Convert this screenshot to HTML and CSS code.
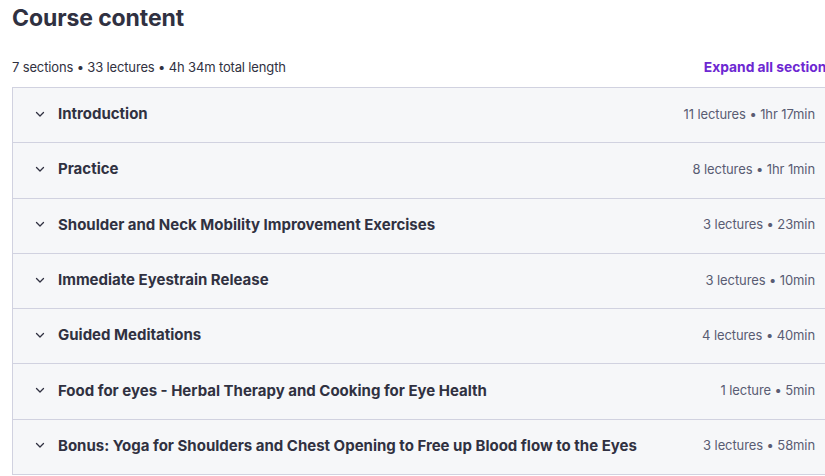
FILE: index.html
```html
<!DOCTYPE html>
<html>
<head>
<meta charset="utf-8">
<link rel="stylesheet" href="styles.css">
</head>
<body>
<div class="course">
  <h2 class="title">Course content</h2>
  <div class="summary">
    <span class="stats">7 sections • 33 lectures • 4h 34m total length</span>
    <button class="expand">Expand all sections</button>
  </div>
  <div class="sections">
    <div class="row"><span class="chev"><svg viewBox="0 0 12 12" width="12" height="12"><path d="M2.5 4.5 L6 8 L9.5 4.5" fill="none" stroke="currentColor" stroke-width="1.3" stroke-linecap="round" stroke-linejoin="round"/></svg></span><span class="name">Introduction</span><span class="meta">11 lectures • 1hr 17min</span></div>
    <div class="row"><span class="chev"><svg viewBox="0 0 12 12" width="12" height="12"><path d="M2.5 4.5 L6 8 L9.5 4.5" fill="none" stroke="currentColor" stroke-width="1.3" stroke-linecap="round" stroke-linejoin="round"/></svg></span><span class="name">Practice</span><span class="meta">8 lectures • 1hr 1min</span></div>
    <div class="row"><span class="chev"><svg viewBox="0 0 12 12" width="12" height="12"><path d="M2.5 4.5 L6 8 L9.5 4.5" fill="none" stroke="currentColor" stroke-width="1.3" stroke-linecap="round" stroke-linejoin="round"/></svg></span><span class="name">Shoulder and Neck Mobility Improvement Exercises</span><span class="meta">3 lectures • 23min</span></div>
    <div class="row"><span class="chev"><svg viewBox="0 0 12 12" width="12" height="12"><path d="M2.5 4.5 L6 8 L9.5 4.5" fill="none" stroke="currentColor" stroke-width="1.3" stroke-linecap="round" stroke-linejoin="round"/></svg></span><span class="name">Immediate Eyestrain Release</span><span class="meta">3 lectures • 10min</span></div>
    <div class="row"><span class="chev"><svg viewBox="0 0 12 12" width="12" height="12"><path d="M2.5 4.5 L6 8 L9.5 4.5" fill="none" stroke="currentColor" stroke-width="1.3" stroke-linecap="round" stroke-linejoin="round"/></svg></span><span class="name">Guided Meditations</span><span class="meta">4 lectures • 40min</span></div>
    <div class="row"><span class="chev"><svg viewBox="0 0 12 12" width="12" height="12"><path d="M2.5 4.5 L6 8 L9.5 4.5" fill="none" stroke="currentColor" stroke-width="1.3" stroke-linecap="round" stroke-linejoin="round"/></svg></span><span class="name">Food for eyes - Herbal Therapy and Cooking for Eye Health</span><span class="meta">1 lecture • 5min</span></div>
    <div class="row"><span class="chev"><svg viewBox="0 0 12 12" width="12" height="12"><path d="M2.5 4.5 L6 8 L9.5 4.5" fill="none" stroke="currentColor" stroke-width="1.3" stroke-linecap="round" stroke-linejoin="round"/></svg></span><span class="name">Bonus: Yoga for Shoulders and Chest Opening to Free up Blood flow to the Eyes</span><span class="meta">3 lectures • 58min</span></div>
  </div>
</div>
</body>
</html>
```

FILE: styles.css
```css
html, body {
  margin: 0;
  padding: 0;
  background: #ffffff;
  overflow: hidden;
}
body {
  font-family: Inter, "Noto Sans", sans-serif;
  color: #303141;
}
.course {
  width: 822px;
  padding: 0 0 0 12px;
}
.title {
  margin: 0;
  padding-top: 4px;
  font-size: 23px;
  line-height: 28px;
  font-weight: 700;
  letter-spacing: -0.1px;
}
.summary {
  display: flex;
  justify-content: space-between;
  align-items: center;
  margin-top: 25px;
  height: 20px;
  margin-bottom: 10px;
}
.stats {
  font-size: 13px;
  letter-spacing: -0.15px;
  color: #303141;
}
.expand {
  border: none;
  background: none;
  padding: 0;
  font-family: inherit;
  font-size: 13.8px;
  font-weight: 700;
  color: #6d28d2;
}
.sections {
  border: 1px solid #d1d2e0;
  border-bottom: none;
}
.row {
  display: flex;
  align-items: center;
  height: 54.3px;
  box-sizing: border-box;
  height: 55.3px;
  background: #f6f7f9;
  border-bottom: 1px solid #d1d2e0;
  padding: 0 18px 3px 21px;
}
.chev {
  display: flex;
  width: 12px;
  height: 12px;
  color: #303141;
  margin-right: 12px;
}
.name {
  flex: 1;
  font-size: 15px;
  font-weight: 700;
}
.meta {
  font-size: 13px;
  letter-spacing: -0.1px;
  color: #595c73;
}
```
